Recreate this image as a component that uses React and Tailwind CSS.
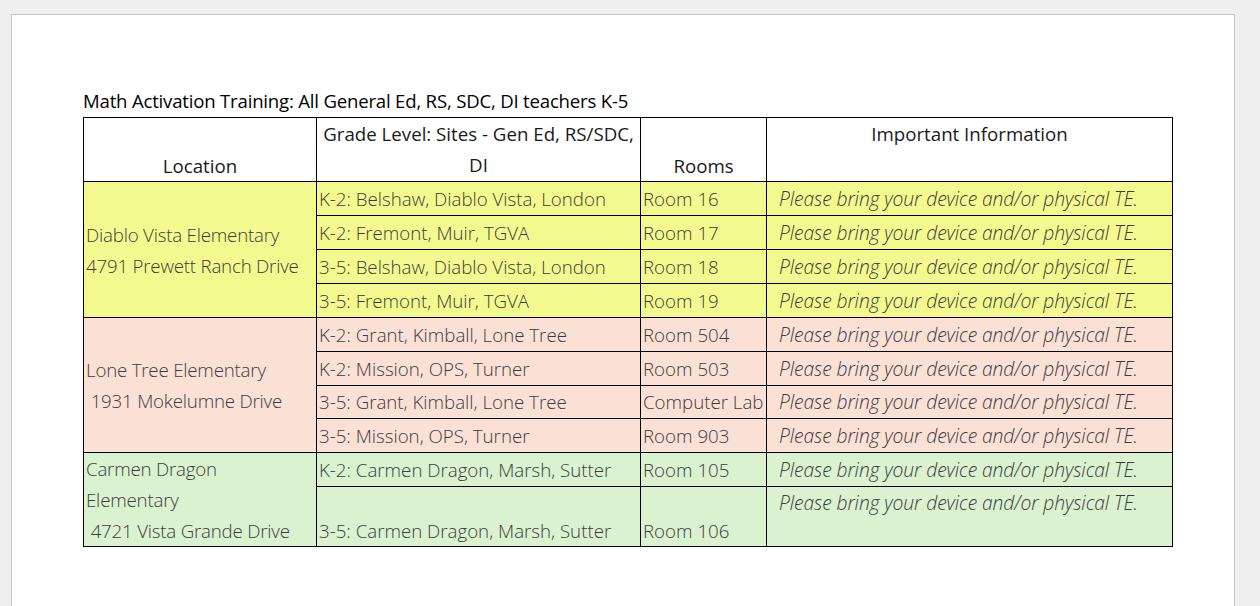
import React from 'react';

const INFO = 'Please bring your device and/or physical TE.';

const groups = [
  {
    bg: 'bg-[#f4f98f]',
    location: ['Diablo Vista Elementary', '4791 Prewett Ranch Drive'],
    rows: [
      ['K-2: Belshaw, Diablo Vista, London', 'Room 16'],
      ['K-2: Fremont, Muir, TGVA', 'Room 17'],
      ['3-5: Belshaw, Diablo Vista, London', 'Room 18'],
      ['3-5: Fremont, Muir, TGVA', 'Room 19'],
    ],
  },
  {
    bg: 'bg-[#fbe0d6]',
    location: ['Lone Tree Elementary', '\u00a01931 Mokelumne Drive'],
    rows: [
      ['K-2: Grant, Kimball, Lone Tree', 'Room 504'],
      ['K-2: Mission, OPS, Turner', 'Room 503'],
      ['3-5: Grant, Kimball, Lone Tree', 'Computer Lab'],
      ['3-5: Mission, OPS, Turner', 'Room 903'],
    ],
  },
];

export default function App() {
  const cell = 'border border-black px-[2px] py-0';
  const info = 'border border-black pl-[12px] pr-[2px] py-0 italic text-[19.3px] tracking-[-0.1px]';

  return (
    <div className="min-h-[606px] bg-[#efefef] pt-[14px] pl-[11px]" style={{ fontFamily: '"Open Sans", "Noto Sans", sans-serif' }}>
      <div className="w-[1224px] h-[600px] bg-white border border-[#c8c8c8] pt-[71px] pl-[71px]">
        {/* Title line above the table */}
        <div className="text-[18.6px] leading-[29px] mb-[2px] text-black tracking-[-0.2px]">
          Math Activation Training: All General Ed, RS, SDC, DI teachers K-5
        </div>

        <table className="table-fixed border-collapse w-[1089px] text-[18.7px] leading-[31px] text-[#3c3c3c] font-light">
          <colgroup>
            <col className="w-[233px]" />
            <col className="w-[324px]" />
            <col className="w-[126px]" />
            <col className="w-[406px]" />
          </colgroup>
          <thead>
            <tr className="h-[64px] text-[#1a1a1a]">
              <th className="border border-black font-normal align-bottom text-center">Location</th>
              <th className="border border-black font-normal align-top text-center">
                Grade Level: Sites - Gen Ed, RS/SDC,<br />DI
              </th>
              <th className="border border-black font-normal align-bottom text-center">Rooms</th>
              <th className="border border-black font-normal align-top text-center">Important Information</th>
            </tr>
          </thead>
          <tbody>
            {groups.map((g, gi) =>
              g.rows.map((r, i) => (
                <tr key={r[0]} className={`${gi === 1 ? 'h-[33.75px]' : 'h-[34px]'} ${g.bg}`}>
                  {i === 0 && (
                    <td rowSpan={4} className={`${cell} align-middle whitespace-pre tracking-[-0.2px]`}>
                      {g.location[0]}
                      <br />
                      {g.location[1]}
                    </td>
                  )}
                  <td className={`${cell} align-middle whitespace-nowrap`}>{r[0]}</td>
                  <td className={`${cell} align-middle whitespace-nowrap`}>{r[1]}</td>
                  <td className={`${info} align-middle whitespace-nowrap`}>{INFO}</td>
                </tr>
              ))
            )}
            <tr className="h-[34px] bg-[#daf2d0]">
              <td rowSpan={2} className={`${cell} align-top whitespace-pre tracking-[-0.2px]`}>
                {'Carmen Dragon\nElementary\n\u00a04721 Vista Grande Drive'}
              </td>
              <td className={`${cell} align-middle whitespace-nowrap`}>K-2: Carmen Dragon, Marsh, Sutter</td>
              <td className={`${cell} align-middle`}>Room 105</td>
              <td className={`${info} align-middle whitespace-nowrap`}>{INFO}</td>
            </tr>
            <tr className="h-[60px] bg-[#daf2d0]">
              <td className={`${cell} align-bottom whitespace-nowrap`}>3-5: Carmen Dragon, Marsh, Sutter</td>
              <td className={`${cell} align-bottom`}>Room 106</td>
              <td className={`${info} align-top whitespace-nowrap`}>{INFO}</td>
            </tr>
          </tbody>
        </table>
      </div>
    </div>
  );
}
